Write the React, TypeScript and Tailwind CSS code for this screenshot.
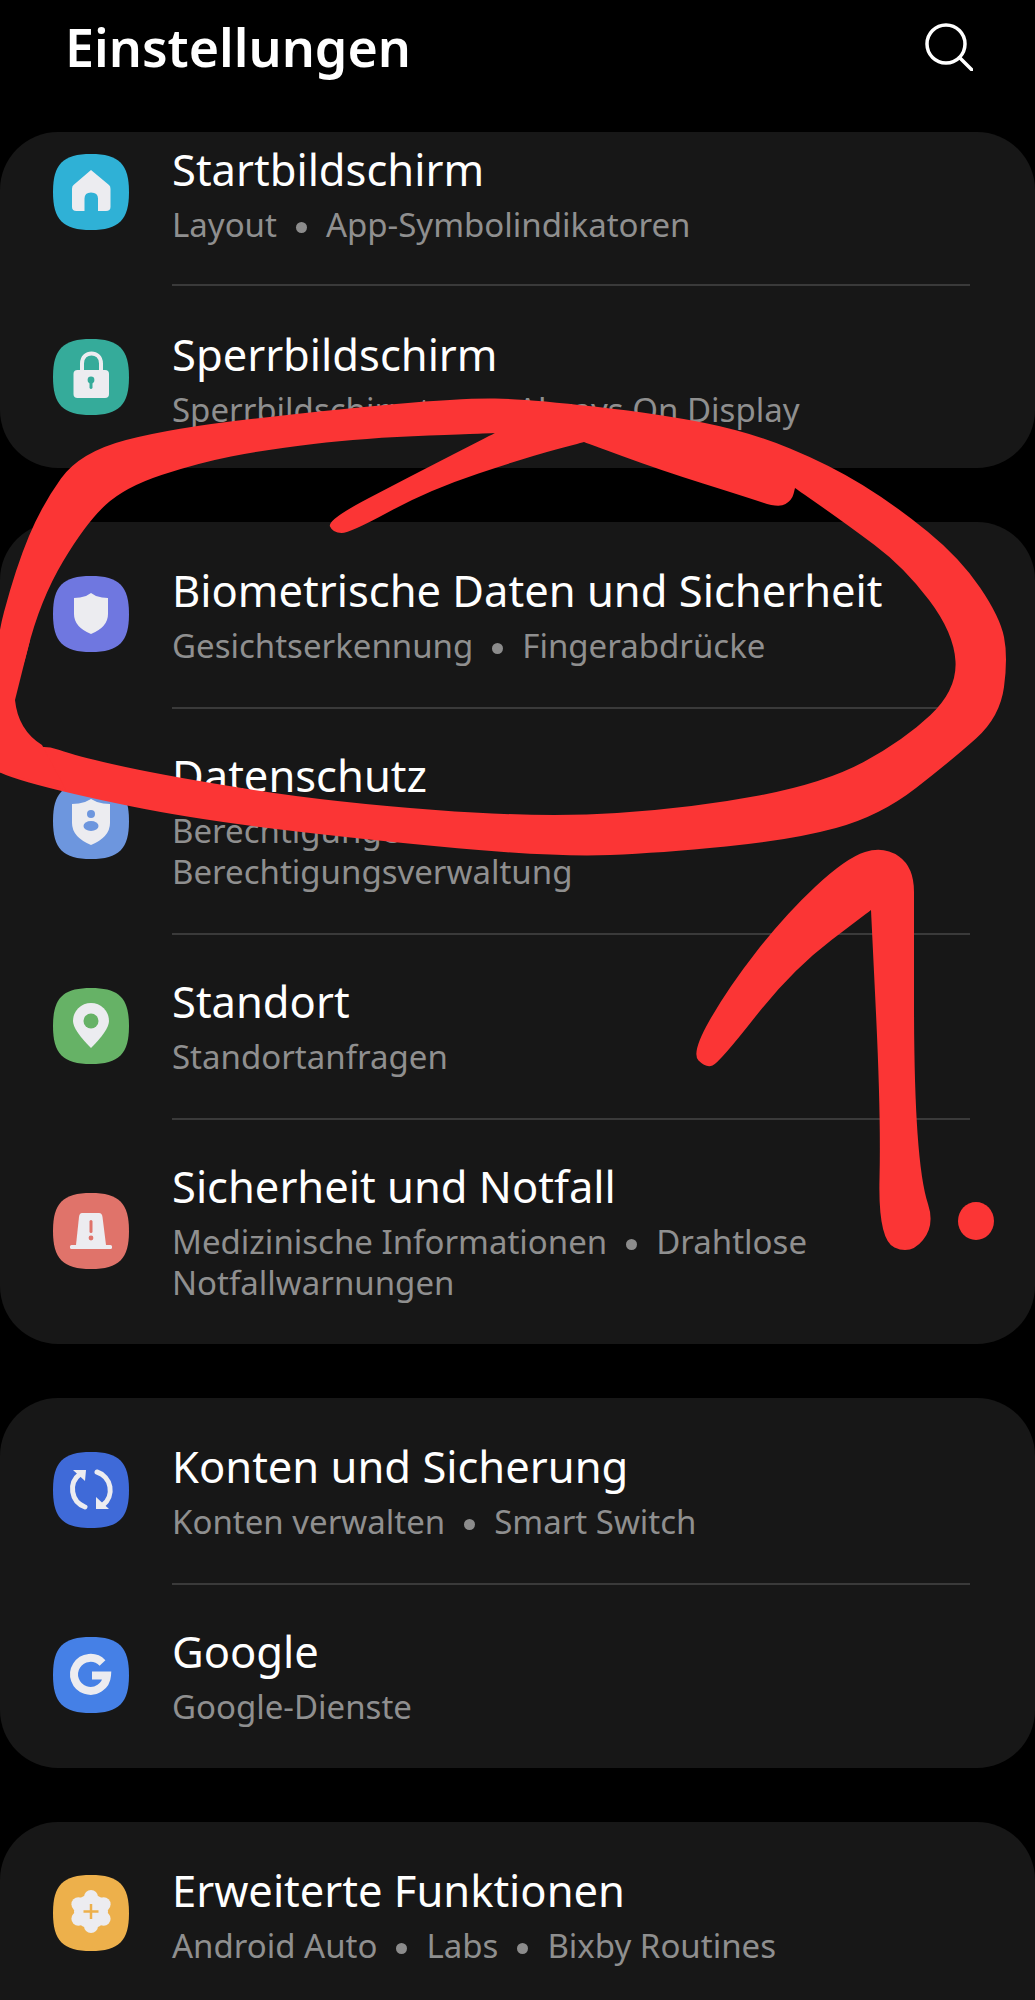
import type { ReactNode } from 'react';

type Pt = [number, number];

// smooth closed shape through midpoints, a repeated point keeps a sharp corner
const smooth = (pts: Pt[]) => {
  const mid = (a: Pt, b: Pt): Pt => [(a[0] + b[0]) / 2, (a[1] + b[1]) / 2];
  const start = mid(pts[pts.length - 1], pts[0]);
  let d = `M${start[0]} ${start[1]}`;
  pts.forEach((p, i) => {
    const m = mid(p, pts[(i + 1) % pts.length]);
    d += ` Q${p[0]} ${p[1]} ${m[0]} ${m[1]}`;
  });
  return d + ' Z';
};

const loop: Pt[] = [
  [-8, 657], [16, 567], [42, 505], [80, 452], [172, 428], [330, 410], [462, 398], [528, 399], [660, 414],
  [750, 432], [830, 465], [895, 505], [960, 558], [1000, 617], [1008, 657], [1000, 717], [952, 760], [880, 816],
  [792, 840], [660, 853], [561, 857], [396, 843], [198, 820], [66, 793], [-8, 772],
  [-8, 760], [40, 743], [79, 757], [172, 777], [330, 802], [541, 818], [693, 808], [825, 783], [904, 740],
  [957, 690], [954, 633], [904, 567], [845, 523], [795, 488], [795, 488], [792, 500], [779, 508], [746, 497], [660, 470],
  [584, 442], [584, 442], [528, 457], [429, 490], [350, 533], [333, 533], [327, 520], [409, 477], [495, 433], [495, 433],
  [363, 438], [264, 450], [198, 463], [125, 487], [86, 523], [40, 600], [15, 700],
];

const arrow: Pt[] = [
  [884, 846], [914, 867], [914, 917], [914, 1083], [921, 1183], [935, 1225], [911, 1255], [878, 1240], [881, 1117],
  [871, 910], [871, 910], [792, 970], [719, 1063], [706, 1068], [691, 1053], [728, 988], [785, 915], [846, 858],
];

const GLYPH = '#ececf0';

const Squircle = ({ color, children }: { color: string; children: ReactNode }) => (
  <svg viewBox="0 0 76 76" className="w-[76px] h-[76px] shrink-0 ml-[53px] mb-[3px]">
    <path d="M38 0C66 0 76 10 76 38C76 66 66 76 38 76C10 76 0 66 0 38C0 10 10 0 38 0Z" fill={color} />
    {children}
  </svg>
);

const HomeIcon = () => (
  <Squircle color="#2fb1d6">
    <path d="M38 16L56 31Q57.5 32 57.5 35V53Q57.5 57 53 57H45V44.5Q45 38.5 38 38.5Q31.5 38.5 31.5 44.5V57H23.5Q19 57 19 53V35Q19 32 20.5 31Z" fill={GLYPH} />
  </Squircle>
);

const LockIcon = () => (
  <Squircle color="#35ab9a">
    <path d="M29 32V24.5C29 11 48 11 48 24.5V32" fill="none" stroke={GLYPH} strokeWidth="4" />
    <rect x="20.5" y="31" width="35.5" height="28" rx="4" fill={GLYPH} />
    <circle cx="38" cy="41" r="3.4" fill="#35ab9a" />
    <rect x="36.5" y="41" width="3" height="9" rx="1.4" fill="#35ab9a" />
  </Squircle>
);

const ShieldIcon = () => (
  <Squircle color="#6f77e0">
    <path d="M38 17L43 20Q49 22 55 22V38Q55 51 38 58Q21 51 21 38V22Q27 22 33 20Z" fill={GLYPH} />
  </Squircle>
);

const PrivacyIcon = () => (
  <Squircle color="#6d96de">
    <path d="M38 16L44 19Q50 21 57 21V40Q57 54 38 62Q19 54 19 40V21Q26 21 32 19Z" fill={GLYPH} />
    <circle cx="38" cy="31" r="4" fill="#6d96de" />
    <ellipse cx="38" cy="43" rx="7.5" ry="5" fill="#6d96de" />
  </Squircle>
);

const PinIcon = () => (
  <Squircle color="#66b266">
    <path d="M38 60Q20 42 20 33A18 18 0 0 1 56 33Q56 42 38 60Z" fill={GLYPH} />
    <circle cx="38" cy="33" r="7.5" fill="#66b266" />
  </Squircle>
);

const AlertIcon = () => (
  <Squircle color="#e0736a">
    <path d="M29 20H46Q49 20 49.5 24L53 52H23L26 24Q26.5 20 29 20Z" fill={GLYPH} />
    <rect x="17" y="52" width="42" height="4" rx="1.5" fill={GLYPH} />
    <rect x="36.5" y="27" width="3" height="13" rx="1.5" fill="#e0736a" />
    <circle cx="38" cy="45" r="2.4" fill="#e0736a" />
  </Squircle>
);

const SyncIcon = () => (
  <Squircle color="#3f6ad8">
    <path d="M32 55A19 19 0 0 1 27 22" fill="none" stroke={GLYPH} strokeWidth="5" strokeLinecap="round" />
    <path d="M20 18H33L32 29Z" fill={GLYPH} />
    <path d="M44 20A19 19 0 0 1 50 53" fill="none" stroke={GLYPH} strokeWidth="5" strokeLinecap="round" />
    <path d="M43 45V57H56Z" fill={GLYPH} />
  </Squircle>
);

const GoogleIcon = () => (
  <Squircle color="#4580e6">
    <path d="M49.5 26A16.5 16.5 0 1 0 54 38.5H39" fill="none" stroke={GLYPH} strokeWidth="8" />
  </Squircle>
);

const GearIcon = () => (
  <Squircle color="#edb04b">
    <circle cx="38" cy="36.5" r="17" fill={GLYPH} />
    <circle cx="38" cy="22" r="7" fill={GLYPH} />
    <circle cx="38" cy="51" r="7" fill={GLYPH} />
    <circle cx="25.4" cy="29.2" r="7" fill={GLYPH} />
    <circle cx="50.6" cy="29.2" r="7" fill={GLYPH} />
    <circle cx="25.4" cy="43.8" r="7" fill={GLYPH} />
    <circle cx="50.6" cy="43.8" r="7" fill={GLYPH} />
    <path d="M38 29V44M30.5 36.5H45.5" stroke="#edb04b" strokeWidth="2.5" />
  </Squircle>
);

const Dot = () => <span className="inline-block w-[11px] h-[11px] rounded-full bg-[#8c8c8c] mx-[19px] align-[4px]" />;

const Row = ({ icon, title, sub, pad }: { icon: ReactNode; title: string; sub: ReactNode; pad: string }) => (
  <div className="flex items-center">
    {icon}
    <div className={`flex-1 ml-[43px] mr-[65px] border-[#3a3a3a] ${pad}`}>
      <div className="text-[43.5px] leading-[55px] text-white whitespace-nowrap">{title}</div>
      <div className="mt-[7px] text-[33px] leading-[41px] text-[#8f8f8f]">{sub}</div>
    </div>
  </div>
);

export default function App() {
  return (
    <div className="relative h-[2000px] w-full overflow-hidden bg-black font-['Noto_Sans',sans-serif]">
      <header className="flex items-center justify-between h-[132px] pb-[38px] pl-[65px] pr-[62px]">
        <h1 className="text-[52px] font-semibold text-white">Einstellungen</h1>
        <svg viewBox="0 0 48 48" className="w-[48px] h-[48px]" fill="none" stroke="white" strokeWidth="3.5" strokeLinecap="round">
          <circle cx="21" cy="21" r="19" />
          <path d="M34.5 34.5L47 47" />
        </svg>
      </header>

      <div className="flex flex-col gap-[54px]">
        <section className="h-[336px] overflow-hidden rounded-[58px] bg-[#171717]">
          <div className="-mt-[31px]">
            <Row icon={<HomeIcon />} title="Startbildschirm" sub={<>Layout<Dot />App-Symbolindikatoren</>} pad="pt-[41px] pb-[39px] border-b-2" />
            <Row icon={<LockIcon />} title="Sperrbildschirm" sub={<>Sperrbildschirmtyp<Dot />Always On Display</>} pad="pt-[41px] pb-[41px]" />
          </div>
        </section>

        <section className="rounded-[58px] bg-[#171717]">
          <Row icon={<ShieldIcon />} title="Biometrische Daten und Sicherheit" sub={<>Gesichtserkennung<Dot />Fingerabdrücke</>} pad="pt-[41px] pb-[41px] border-b-2" />
          <Row icon={<PrivacyIcon />} title="Datenschutz" sub={<>Berechtigungen<br />Berechtigungsverwaltung</>} pad="pt-[39px] pb-[41px] border-b-2" />
          <Row icon={<PinIcon />} title="Standort" sub="Standortanfragen" pad="pt-[39px] pb-[41px] border-b-2" />
          <Row icon={<AlertIcon />} title="Sicherheit und Notfall" sub={<>Medizinische Informationen<Dot />Drahtlose Notfallwarnungen</>} pad="pt-[39px] pb-[41px]" />
        </section>

        <section className="rounded-[58px] bg-[#171717]">
          <Row icon={<SyncIcon />} title="Konten und Sicherung" sub={<>Konten verwalten<Dot />Smart Switch</>} pad="pt-[41px] pb-[41px] border-b-2" />
          <Row icon={<GoogleIcon />} title="Google" sub="Google-Dienste" pad="pt-[39px] pb-[41px]" />
        </section>

        <section className="rounded-t-[58px] bg-[#171717]">
          <Row icon={<GearIcon />} title="Erweiterte Funktionen" sub={<>Android Auto<Dot />Labs<Dot />Bixby Routines</>} pad="pt-[41px] pb-[41px]" />
        </section>
      </div>

      {/* red marker scribble on top of the screenshot */}
      <svg viewBox="0 0 1035 2000" className="absolute inset-0 w-[1035px] h-[2000px] pointer-events-none" fill="#fb3535">
        <path d={smooth(loop)} />
        <path d="M-8 640L30 640L15 700Q18 730 42 745L66 790L-8 770Z" />
        <path d={smooth(arrow)} />
        <ellipse cx="976" cy="1221" rx="18" ry="19" />
      </svg>
    </div>
  );
}
